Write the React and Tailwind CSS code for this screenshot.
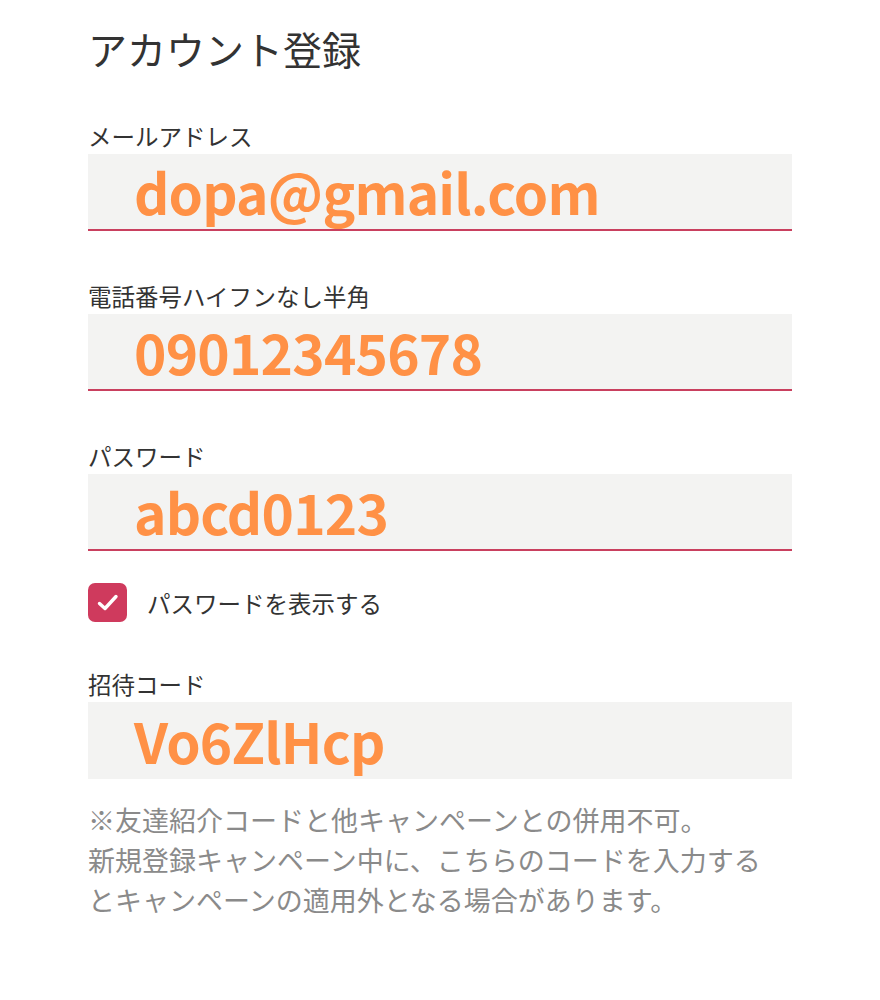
import React from "react";

const font = { fontFamily: '"Noto Sans CJK JP", "Noto Sans", sans-serif' };

function Field({ label, value, underline = true }) {
  return (
    <div className="flex flex-col">
      <div className="text-[23.5px] leading-[30px] text-[#333333] mb-[3px]">{label}</div>
      <div
        className={
          "h-[77px] bg-[#f3f3f2] flex items-center pl-[46px] " +
          (underline ? "border-b-2 border-[#c9405f]" : "")
        }
      >
        <span className="text-[55px] leading-none font-bold tracking-[-0.8px] text-[#ff9146]">{value}</span>
      </div>
    </div>
  );
}

export default function App() {
  return (
    <div className="w-[880px] min-h-[1000px] bg-white px-[88px] pt-[24px]" style={font}>
      <h1 className="text-[39px] leading-[49px] text-[#333333] font-normal">アカウント登録</h1>
      <div className="mt-[48px] flex flex-col gap-[50px]">
        <Field label="メールアドレス" value="dopa@gmail.com" />
        <Field label="電話番号ハイフンなし半角" value="09012345678" />
        <Field label="パスワード" value="abcd0123" />
      </div>
      <div className="mt-[32px] flex items-center gap-[20px]">
        <div className="w-[39px] h-[39px] rounded-[7px] bg-[#cf3a5d] flex items-center justify-center">
          <svg width="24" height="24" viewBox="0 0 24 24" fill="none">
            <path d="M3.5 12.5 L9 17.5 L20 5.5" stroke="white" strokeWidth="3.4" strokeLinecap="round" strokeLinejoin="round" />
          </svg>
        </div>
        <span className="text-[23.5px] leading-[30px] text-[#333333]">パスワードを表示する</span>
      </div>
      <div className="mt-[47px]">
        <Field label="招待コード" value="Vo6ZlHcp" underline={false} />
      </div>
      <div className="mt-[21px] text-[27px] leading-[40px] text-[#8a8a8a]">
        <p>※友達紹介コードと他キャンペーンとの併用不可。</p>
        <p>新規登録キャンペーン中に、こちらのコードを入力する</p>
        <p>とキャンペーンの適用外となる場合があります。</p>
      </div>
    </div>
  );
}
